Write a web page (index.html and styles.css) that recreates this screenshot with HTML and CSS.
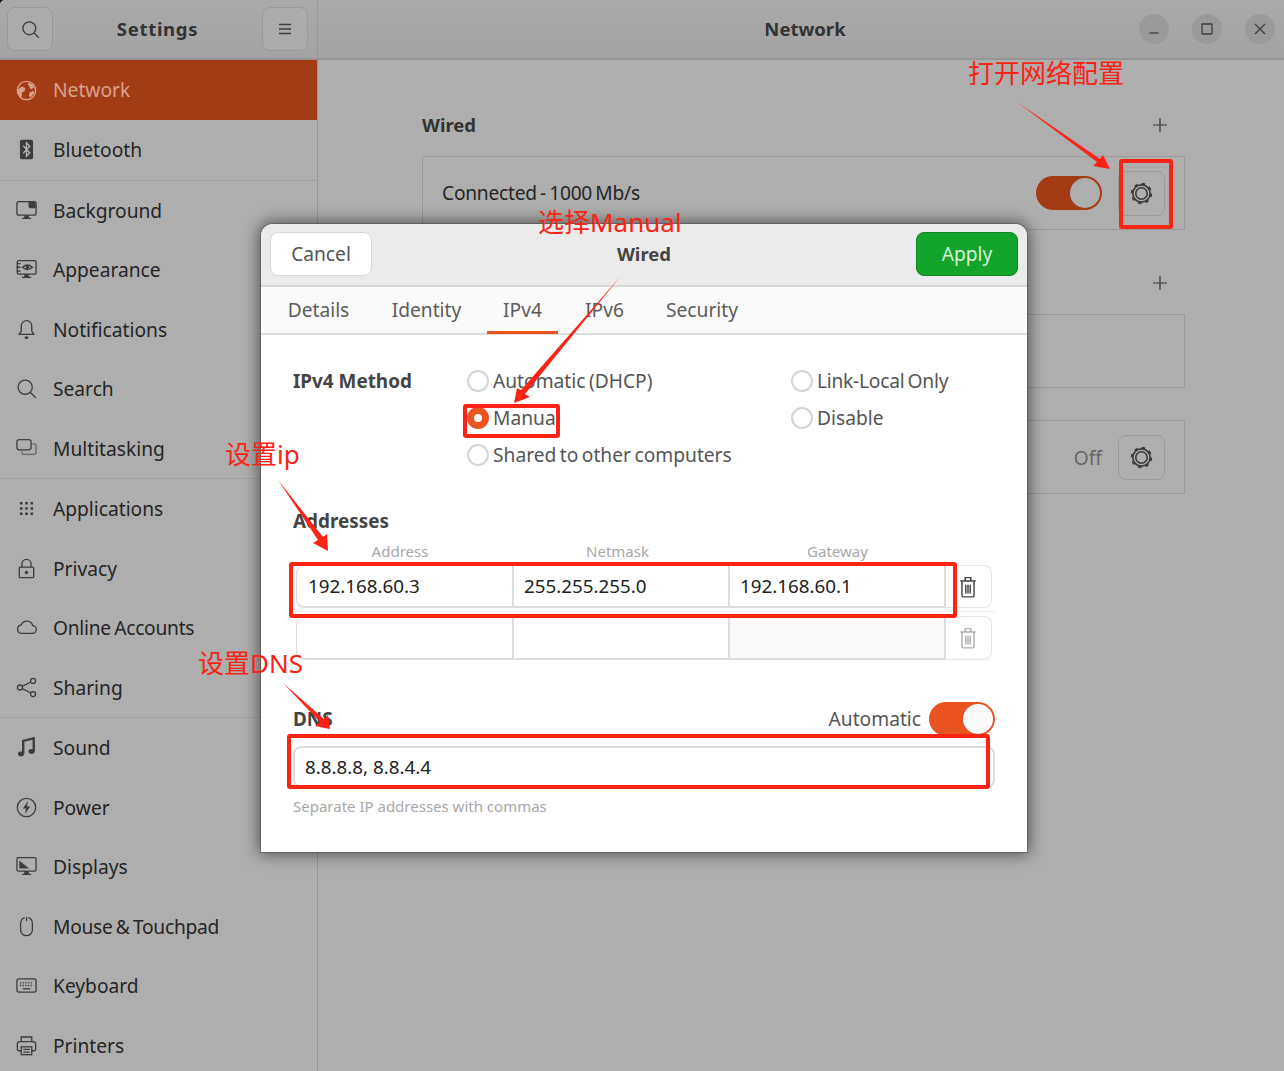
FILE: index.html
```html
<!DOCTYPE html>
<html lang="en">
<head>
<meta charset="utf-8">
<title>Settings - Network</title>
<link rel="stylesheet" href="styles.css">
</head>
<body>
<div class="window">
  <aside class="sidebar">
    <header class="side-head">
      <button class="hbtn"><svg class="ic ic-md" viewBox="0 0 16 16"><circle cx="7" cy="7" r="5.4"/><path d="M11 11l4 4"/></svg></button>
      <span class="head-title wide">Settings</span>
      <button class="hbtn"><svg class="ic ic-sm" viewBox="0 0 16 16"><path d="M2 3.5h12M2 8h12M2 12.500h12"/></svg></button>
    </header>
    <nav class="nav">
      <a class="row active"><svg class="ic" viewBox="0 0 16 16"><circle cx="8" cy="8" r="7"/><path class="f" d="M1.500 7l3-2 2.500 1-.5 2.500-2 1v3l-1 .5-2.500-3.500zM9.500 2l3 1.200 1.300 2.800-2.800.8-1-2-1-1.300zM10.500 9.500l3-1.300.4 1.800-2.900 3.300-1.200-1.300z"/></svg><span>Network</span></a>
      <a class="row"><svg class="ic" viewBox="0 0 16 16"><rect class="f" x="3" y="0.500" width="10" height="15" rx="1.500"/><path class="rune" d="M5.500 5.200l5 5.300L8 13V3l2.500 2.500-5 5.300"/></svg><span>Bluetooth</span></a>
      <div class="sep"></div>
      <a class="row"><svg class="ic" viewBox="0 0 16 16"><rect x="0.700" y="1.200" width="14.600" height="10.300" rx="1.500"/><path class="f" d="M9.500 1.500v2.800a2 2 0 0 0 2 2H15V3a1.500 1.500 0 0 0-1.500-1.500z"/><path class="f" d="M6.500 11.500l-.4 2H4.500v1h7v-1H9.900l-.4-2z"/></svg><span>Background</span></a>
      <a class="row"><svg class="ic" viewBox="0 0 16 16"><rect x="1" y="1.200" width="14.300" height="10.300" rx="1"/><path d="M5 6.300q3.500-3.400 7.500 0-4 3.400-7.500 0zM.5 3.500h3M.5 6.300h3M.5 9.200h3"/><circle class="f" cx="8.700" cy="6.300" r="1.300"/><path class="f" d="M6.500 11.500l-.4 2H4.500v1h7v-1H9.900l-.4-2z"/></svg><span>Appearance</span></a>
      <a class="row"><svg class="ic" viewBox="0 0 16 16"><path d="M8 1.200a4 4 0 0 0-4 4v4l-1.500 2.500h11L12 9.200v-4a4 4 0 0 0-4-4z"/><path class="thick" d="M6.700 14.200h2.600"/></svg><span>Notifications</span></a>
      <a class="row"><svg class="ic" viewBox="0 0 16 16"><circle cx="7" cy="7" r="5.400"/><path d="M11 11l4 4"/></svg><span>Search</span></a>
      <a class="row"><svg class="ic" viewBox="0 0 16 16"><rect x="0.700" y="1.200" width="10.800" height="7.800" rx="1.800"/><path class="soft" d="M12.500 4.500h1.300a1.500 1.500 0 0 1 1.500 1.500v5a1.500 1.500 0 0 1-1.500 1.500H6a1.500 1.500 0 0 1-1.500-1.500v-1"/></svg><span>Multitasking</span></a>
      <div class="sep"></div>
      <a class="row"><svg class="ic" viewBox="0 0 16 16"><path class="f" d="M3 3h2v2H3zM7 3h2v2H7zM11 3h2v2h-2zM3 7h2v2H3zM7 7h2v2H7zM11 7h2v2h-2zM3 11h2v2H3zM7 11h2v2H7zM11 11h2v2h-2z"/></svg><span>Applications</span></a>
      <a class="row"><svg class="ic" viewBox="0 0 16 16"><rect x="2.500" y="7" width="11" height="8" rx="0.800"/><path d="M4.500 7V4.500a3.500 3.500 0 0 1 7 0V7"/><circle class="f" cx="8" cy="11" r="1.300"/></svg><span>Privacy</span></a>
      <a class="row"><svg class="ic" viewBox="0 0 16 16"><path d="M4 12.500h8.200a3 3 0 0 0 .5-6A4.600 4.600 0 0 0 4 6 3.300 3.300 0 0 0 4 12.500z"/></svg><span class="tight">Online Accounts</span></a>
      <a class="row"><svg class="ic" viewBox="0 0 16 16"><circle cx="3" cy="8" r="1.900"/><circle cx="13" cy="3" r="1.900"/><circle cx="13" cy="13" r="1.900"/><path d="M4.700 7.200l6.600-3.400M4.700 8.800l6.600 3.400"/></svg><span>Sharing</span></a>
      <div class="sep"></div>
      <a class="row"><svg class="ic" viewBox="0 0 16 16"><path class="thick" d="M5.500 13V3l8-2v10"/><ellipse class="f" cx="3.800" cy="13" rx="2.300" ry="1.900"/><ellipse class="f" cx="11.800" cy="11" rx="2.300" ry="1.900"/></svg><span>Sound</span></a>
      <a class="row"><svg class="ic" viewBox="0 0 16 16"><circle cx="8" cy="8" r="7"/><path class="f" d="M9.200 3L5.200 8.800h2.400L6.800 13l4-5.800H8.400z"/></svg><span>Power</span></a>
      <a class="row"><svg class="ic" viewBox="0 0 16 16"><rect x="0.700" y="1.200" width="14.600" height="10.300" rx="1"/><path class="f" d="M2.500 3.500l7.500 6H2.500z"/><path class="f" d="M6.500 11.500l-.4 2H4.500v1h7v-1H9.900l-.4-2z"/></svg><span>Displays</span></a>
      <a class="row"><svg class="ic" viewBox="0 0 16 16"><path d="M6.500 1.200C4.500 1.800 3.500 3.500 3.500 6v4.500a4.500 4.500 0 0 0 9 0V6c0-2.500-1-4.200-3-4.800"/><path d="M8 .8v3"/></svg><span class="tight">Mouse &amp; Touchpad</span></a>
      <a class="row"><svg class="ic" viewBox="0 0 16 16"><rect x="0.700" y="3" width="14.600" height="10" rx="1.500"/><path class="dots" d="M3 6h10M3 8h10"/><path d="M5 10.500h6"/></svg><span>Keyboard</span></a>
      <a class="row"><svg class="ic" viewBox="0 0 16 16"><path d="M4 5V1.500h8V5M4 12H2.200A1.200 1.200 0 0 1 1 10.800V7a2 2 0 0 1 2-2h10a2 2 0 0 1 2 2v3.800a1.200 1.200 0 0 1-1.200 1.200H12"/><rect x="4" y="9" width="8" height="6"/><path d="M5.500 11h5M5.500 13h5"/></svg><span>Printers</span></a>
    </nav>
  </aside>

  <main class="main">
    <header class="main-head">
      <span class="head-title">Network</span>
      <div class="controls">
        <span class="ctl"><svg class="ic ic-sm" viewBox="0 0 16 16"><path d="M3.500 12h9"/></svg></span>
        <span class="ctl"><svg class="ic ic-sm" viewBox="0 0 16 16"><rect x="3" y="3" width="10" height="10" rx="0.500" /></svg></span>
        <span class="ctl"><svg class="ic ic-sm" viewBox="0 0 16 16"><path d="M3 3l10 10M13 3L3 13"/></svg></span>
      </div>
    </header>
    <div class="content">
      <div class="sec-head"><strong class="sec-title">Wired</strong><svg class="plus" viewBox="0 0 16 16"><path d="M8 1v14M1 8h14"/></svg></div>
      <div class="card">
        <span class="card-label"><span class="tight">Connected - 1000 Mb/s</span></span>
        <span class="switch dim"><i></i></span>
        <span class="gear-btn"><svg class="gear" viewBox="0 0 16 16"><circle class="teeth" cx="8" cy="8" r="6.800"/><circle cx="8" cy="8" r="6"/><circle cx="8" cy="8" r="4"/></svg></span>
      </div>
      <div class="sec-head second"><span></span><svg class="plus" viewBox="0 0 16 16"><path d="M8 1v14M1 8h14"/></svg></div>
      <div class="card"></div>
      <div class="card third">
        <span class="off">Off</span>
        <span class="gear-btn"><svg class="gear" viewBox="0 0 16 16"><circle class="teeth" cx="8" cy="8" r="6.800"/><circle cx="8" cy="8" r="6"/><circle cx="8" cy="8" r="4"/></svg></span>
      </div>
    </div>
  </main>
</div>

<section class="dialog">
  <header class="dlg-head">
    <button class="dbtn">Cancel</button>
    <strong class="dlg-title">Wired</strong>
    <button class="dbtn apply">Apply</button>
  </header>
  <div class="tabs">
    <span class="tab t1">Details</span>
    <span class="tab t2">Identity</span>
    <span class="tab t3 on">IPv4</span>
    <span class="tab t4">IPv6</span>
    <span class="tab t5">Security</span>
  </div>
  <div class="dlg-body">
    <div class="method">
      <strong class="lbl">IPv4 Method</strong>
      <label class="radio"><i></i>Automatic (DHCP)</label>
      <label class="radio"><i></i><span class="tight">Link-Local Only</span></label>
      <label class="radio sel c2"><i></i>Manual</label>
      <label class="radio"><i></i>Disable</label>
      <label class="radio c2"><i></i>Shared to other computers</label>
    </div>
    <strong class="lbl addr-title">Addresses</strong>
    <div class="cols">
      <span>Address</span><span>Netmask</span><span>Gateway</span>
    </div>
    <div class="addr first">
      <span class="cell">192.168.60.3</span><span class="cell">255.255.255.0</span><span class="cell">192.168.60.1</span>
      <span class="del"><svg class="trash" viewBox="0 0 16 20"><path d="M1 4.500h14M5.500 4V1.500h5V4M2.500 5v13a1 1 0 0 0 1 1h9a1 1 0 0 0 1-1V5M6 8v8M8 8v8M10 8v8"/></svg></span>
    </div>
    <div class="addr-line"></div>
    <div class="addr">
      <span class="cell"></span><span class="cell"></span><span class="cell grey"></span>
      <span class="del faded"><svg class="trash" viewBox="0 0 16 20"><path d="M1 4.500h14M5.500 4V1.500h5V4M2.500 5v13a1 1 0 0 0 1 1h9a1 1 0 0 0 1-1V5M6 8v8M8 8v8M10 8v8"/></svg></span>
    </div>
    <div class="dns-head">
      <strong class="lbl">DNS</strong>
      <span class="auto">Automatic</span>
      <span class="switch"><i></i></span>
    </div>
    <div class="dns-field">8.8.8.8, 8.8.4.4</div>
    <p class="hint">Separate IP addresses with commas</p>
  </div>
</section>

<div class="notes">
  <svg class="arrows" viewBox="0 0 1284 1071">
    <path d="M1017 102L1100 159L1103 155L1110 169L1093 166L1097 162Z"/>
    <path d="M620 277L521 390L517 388L514 403L530 397L525 394Z"/>
    <path d="M278 480L323 537L327 534L328 551L313 543L318 540Z"/>
    <path d="M283 683L324 719L328 715L330 729L315 726L320 722Z"/>
  </svg>
  <span class="note n1">打开网络配置</span>
  <span class="note n2">选择Manual</span>
  <span class="note n3">设置ip</span>
  <span class="note n4">设置DNS</span>
  <span class="box b1"></span>
  <span class="box b2"></span>
  <span class="box b3"></span>
  <span class="box b4"></span>
</div>
</body>
</html>
```
FILE: styles.css
```css
* { box-sizing: border-box; }
html, body { margin: 0; height: 1071px; overflow: hidden; }
body {
  position: relative;
  background: #2c0a20;
  font-family: "Noto Sans", "Open Sans", sans-serif;
  font-size: 19.200px;
  word-spacing: -1.500px;
  color: #252525;
}
.tight { letter-spacing: -.25px; }
.window {
  display: flex;
  height: 1071px;
  background: #aeaeae;
  border-top-left-radius: 5px;
  overflow: hidden;
}
.sidebar { width: 318px; flex: none; border-right: 1px solid #989898; }
.side-head, .main-head {
  height: 60px;
  display: flex;
  align-items: center;
  background: linear-gradient(#a9a9a9, #a3a3a3);
  border-bottom: 2px solid #959595;
}
.side-head { justify-content: space-between; padding: 0 9px 0 7px; }
.head-title { font-weight: 700; font-size: 18.500px; color: #333; margin-bottom: 2px; }
.head-title.wide { letter-spacing: .7px; }
.hbtn {
  width: 46px;
  height: 44px;
  padding: 0;
  display: flex;
  align-items: center;
  justify-content: center;
  background: #ababab;
  border: 1px solid #999;
  border-radius: 8px;
  color: #3a3a3a;
}
.ic {
  width: 21px;
  height: 21px;
  flex: none;
  fill: none;
  stroke: currentColor;
  stroke-width: 1;
  color: #3d3d3d;
}
.ic-md { width: 19px; height: 19px; stroke-width: 1.100; }
.ic-sm { width: 16px; height: 16px; stroke-width: 1.300; }
.ic .f { fill: currentColor; stroke: none; }
.ic .thick { stroke-width: 1.800; }
.ic .rune { stroke: #b5b5b5; stroke-width: 1; }
.ic .soft { stroke: #666; }
.ic .dots { stroke-dasharray: 1 1; }
.row {
  height: 59.500px;
  display: flex;
  align-items: center;
  gap: 16px;
  padding-left: 16px;
  white-space: nowrap;
}
.row.active { height: 60px; background: #a33c15; color: #d9a28e; }
.row.active .ic { color: #d9a28e; }
.row.active span { margin-bottom: 2px; }
.sep { height: 1px; background: #a0a0a0; }
.main { flex: 1; min-width: 0; }
.main-head { position: relative; justify-content: center; padding-left: 8px; }
.controls {
  position: absolute;
  right: 9px;
  top: 14px;
  display: flex;
  gap: 23px;
}
.ctl {
  width: 30px;
  height: 30px;
  border-radius: 50%;
  background: #9a9a9a;
  display: flex;
  align-items: center;
  justify-content: center;
}
.content { padding: 50px 99px 0 104px; }
.sec-head {
  height: 30px;
  display: flex;
  align-items: center;
  justify-content: space-between;
  margin-bottom: 16px;
  padding-right: 17px;
}
.sec-head.second { margin-top: 38px; }
.sec-title { font-size: 18.500px; color: #333; margin-bottom: 2px; }
.plus { width: 16px; height: 16px; fill: none; stroke: #333; stroke-width: 1.200; }
.card {
  height: 74px;
  display: flex;
  align-items: center;
  padding: 0 19px 0 19px;
  background: #aeaeae;
  border: 1px solid #999;
}
.card.third { margin-top: 32px; justify-content: flex-end; }
.card-label { flex: 1; margin-bottom: 2px; }
.off { color: #666; margin-right: 16px; }
.switch {
  width: 66px;
  height: 34px;
  flex: none;
  display: flex;
  justify-content: flex-end;
  padding: 2px;
  border-radius: 17px;
  background: #e95420;
}
.switch i { width: 30px; height: 30px; border-radius: 50%; background: #fafafa; }
.switch.dim { background: #a33c15; margin-right: 16px; }
.switch.dim i { background: #aeaeae; }
.gear-btn {
  width: 47px;
  height: 45px;
  flex: none;
  display: flex;
  align-items: center;
  justify-content: center;
  border: 1px solid #999;
  border-radius: 8px;
}
.gear { width: 23px; height: 23px; fill: none; stroke: #3a3a3a; stroke-width: 1.100; }
.gear .teeth { stroke-width: 1.300; stroke-dasharray: 2.400 2.940; }

.dialog {
  position: absolute;
  left: 261px;
  top: 224px;
  width: 766px;
  height: 628px;
  background: #fff;
  border-radius: 12px 12px 0 0;
  box-shadow: 0 0 16px 2px rgba(0, 0, 0, .55), 0 0 0 1px rgba(0, 0, 0, .18);
  color: #555;
}
.dlg-head {
  height: 63px;
  display: flex;
  align-items: center;
  justify-content: space-between;
  padding: 0 9px 1px 9px;
  background: #ebebeb;
  border-bottom: 2px solid #d6d6d6;
  border-radius: 12px 12px 0 0;
}
.dbtn {
  width: 102px;
  height: 44px;
  padding: 0 0 2px;
  font: inherit;
  color: #555;
  background: #fff;
  border: 1px solid #d8d8d8;
  border-radius: 8px;
}
.dbtn.apply { background: #13a52b; border-color: #0f8523; color: #d5f3da; }
.dlg-title { font-size: 18.500px; color: #444; margin-bottom: 2px; }
.tabs {
  height: 48px;
  display: flex;
  background: #fafafa;
  border-bottom: 2px solid #dcdcdc;
}
.tab {
  display: flex;
  align-items: center;
  justify-content: center;
  height: 47px;
  flex: none;
  padding-bottom: 2px;
  color: #5c5c5c;
}
.t1 { width: 115px; }
.t2 { width: 101px; }
.t3 { width: 71px; margin-left: 10px; }
.t3.on { border-bottom: 3px solid #e95420; padding-bottom: 0; }
.t4 { width: 93px; }
.t5 { width: 102px; }
.dlg-body { padding: 27px 32px 0; }
.lbl { font-size: 18.900px; word-spacing: 0; color: #444; display: block; }
.method {
  display: grid;
  grid-template-columns: 174px 324px 1fr;
  grid-auto-rows: 37px;
  align-items: center;
}
.radio {
  display: flex;
  align-items: center;
  gap: 4px;
  white-space: nowrap;
}
.radio.c2 { grid-column: 2; }
.radio i {
  width: 22px;
  height: 22px;
  flex: none;
  background: #fff;
  border: 2px solid #d4d4d4;
  border-radius: 50%;
}
.radio.sel i { border: 7px solid #e95420; }
.addr-title { margin-top: 36px; line-height: 24px; }
.cols {
  display: grid;
  grid-template-columns: 208px 227px 213px;
  margin: 8px 0 4px 3px;
  line-height: 20px;
  font-size: 15px;
  color: #a8a8a8;
  text-align: center;
}
.addr {
  display: flex;
  height: 44px;
  margin-left: 3px;
  width: 696px;
}
.addr.first { height: 43px; }
.addr-line { height: 1px; width: 699px; margin: 3px 0 4px 3px; background: #ececec; }
.cell {
  width: 216px;
  padding-left: 10px;
  display: flex;
  align-items: center;
  font-size: 18.800px;
  color: #222;
  border: solid #dcdcdc;
  border-width: 0 2px 2px 0;
}
.cell:first-child { width: 218px; padding-left: 11px; border-left: 1px solid #dcdcdc; border-radius: 8px 0 0 8px; }
.addr.first .cell { border-top: 1px solid #e2e2e2; }
.cell.grey { background: #fafafa; }
.del {
  width: 46px;
  flex: none;
  display: flex;
  align-items: center;
  justify-content: center;
  padding-right: 2px;
  border: 1px solid #e6e6e6;
  border-left: 0;
  border-radius: 0 8px 8px 0;
}
.trash { width: 18px; height: 22px; fill: none; stroke: #444; stroke-width: 1.300; }
.del.faded .trash { stroke: #b0b0b0; }
.dns-head {
  display: flex;
  align-items: center;
  height: 34px;
  margin-top: 42px;
}
.dns-head .lbl { flex: 1; }
.auto { margin: 0 8px 2px 0; }
.dns-field {
  height: 42px;
  margin-top: 10px;
  padding-left: 10px;
  display: flex;
  align-items: center;
  font-size: 18.800px;
  word-spacing: 0;
  color: #222;
  border: 2px solid #dcdcdc;
  border-radius: 8px;
}
.hint { margin: 8px 0 0; line-height: 20px; font-size: 15px; word-spacing: 0; color: #a8a8a8; }

.notes { position: absolute; inset: 0; pointer-events: none; }
.arrows { position: absolute; left: 0; top: 0; width: 1284px; height: 1071px; fill: #fb2314; }
.note {
  position: absolute;
  font-family: "Noto Sans", "Noto Sans CJK SC", sans-serif;
  font-size: 26px;
  font-weight: 400;
  line-height: 30px;
  word-spacing: 0;
  color: #fb2314;
  white-space: nowrap;
}
.n1 { left: 968px; top: 58px; }
.n2 { left: 538px; top: 207px; }
.n3 { left: 225px; top: 439px; }
.n4 { left: 198px; top: 648px; }
.box { position: absolute; border: 4px solid #fb2314; border-radius: 3px; }
.b1 { left: 1119px; top: 159px; width: 54px; height: 70px; }
.b2 { left: 463px; top: 404px; width: 97px; height: 34px; }
.b3 { left: 289px; top: 562px; width: 668px; height: 56px; }
.b4 { left: 287px; top: 734px; width: 703px; height: 55px; }
```
